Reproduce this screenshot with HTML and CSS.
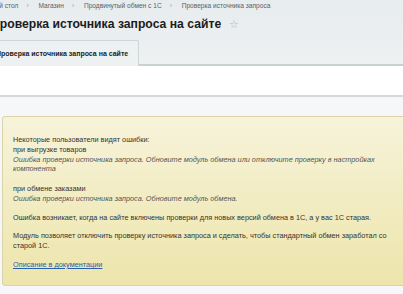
FILE: index.html
```html
<!DOCTYPE html>
<html lang="ru">
<head>
  <meta charset="UTF-8">
  <title>Проверка источника запроса на сайте</title>
  <link rel="stylesheet" href="styles.css">
</head>
<body>
  <div class="header">
    <div class="breadcrumbs">
      <span>Рабочий стол</span><span class="sep">›</span>
      <span>Магазин</span><span class="sep">›</span>
      <span>Продвинутый обмен с 1С</span><span class="sep">›</span>
      <span>Проверка источника запроса</span>
    </div>
    <h1 class="title">Проверка источника запроса на сайте <span class="star">☆</span></h1>
    <div class="tabs">
      <div class="tab">Проверка источника запроса на сайте</div>
    </div>
  </div>
  <div class="tab-body"></div>
  <div class="content">
    <div class="note">
      <p>Некоторые пользователи видят ошибки:<br>
        при выгрузке товаров<br>
        <i>Ошибка проверки источника запроса. Обновите модуль обмена или отключите проверку в настройках компонента</i><br>
        <br>
        при обмене заказами<br>
        <i>Ошибка проверки источника запроса. Обновите модуль обмена.</i></p>
      <p>Ошибка возникает, когда на сайте включены проверки для новых версий обмена в 1С, а у вас 1С старая.</p>
      <p>Модуль позволяет отключить проверку источника запроса и сделать, чтобы стандартный обмен заработал со старой 1С.</p>
      <p class="doc"><a href="#">Описание в документации</a></p>
    </div>
  </div>
</body>
</html>
```

FILE: styles.css
```css
body {
  margin: 0;
  font-family: "Liberation Sans", Arial, sans-serif;
  background: #f5f7f8;
  overflow: hidden;
}

.header {
  background: linear-gradient(#e7ecee, #eef1f2);
  height: 66px;
  border-bottom: 2px solid #c8d0d2;
  box-sizing: border-box;
  position: relative;
}

.breadcrumbs {
  margin-left: -23px;
  padding-top: 2px;
  font-size: 6.6px;
  color: #5a6266;
  white-space: nowrap;
}

.breadcrumbs .sep {
  margin: 0 8px;
  color: #9aa3a6;
}

.title {
  margin: 8px 0 0 -9px;
  font-size: 12.2px;
  font-weight: bold;
  color: #1c1c1c;
  white-space: nowrap;
}

.star {
  font-size: 11px;
  color: #b4b8ba;
  font-weight: normal;
  margin-left: 4px;
}

.tabs {
  position: absolute;
  left: 0;
  bottom: -2px;
}

.tab {
  margin-left: -7px;
  width: 146px;
  height: 26px;
  padding-left: 2px;
  box-sizing: border-box;
  border: 1px solid #cfd6d8;
  border-bottom: none;
  background: #eef1f2;
  font-size: 7px;
  font-weight: bold;
  color: #1c1c1c;
  line-height: 25px;
  white-space: nowrap;
  border-radius: 2px 2px 0 0;
}

.tab-body {
  background: #fff;
  height: 29px;
  border-bottom: 2px solid #d4dadc;
}

.content {
  padding: 19px 0 12px 2px;
}

.note {
  margin-right: -10px;
  padding: 18px 10px 15px 10px;
  background: linear-gradient(#f7f3da, #ede5ab);
  border: 1px solid #dcd3a9;
  border-radius: 3px;
  font-size: 7.3px;
  line-height: 9.8px;
  color: #333;
}

.note p {
  margin: 0 0 9px 0;
}

.note p.doc {
  margin: 7px 0 0 0;
}

.note i {
  color: #555;
}

.note a {
  color: #2b5fa8;
}
```
